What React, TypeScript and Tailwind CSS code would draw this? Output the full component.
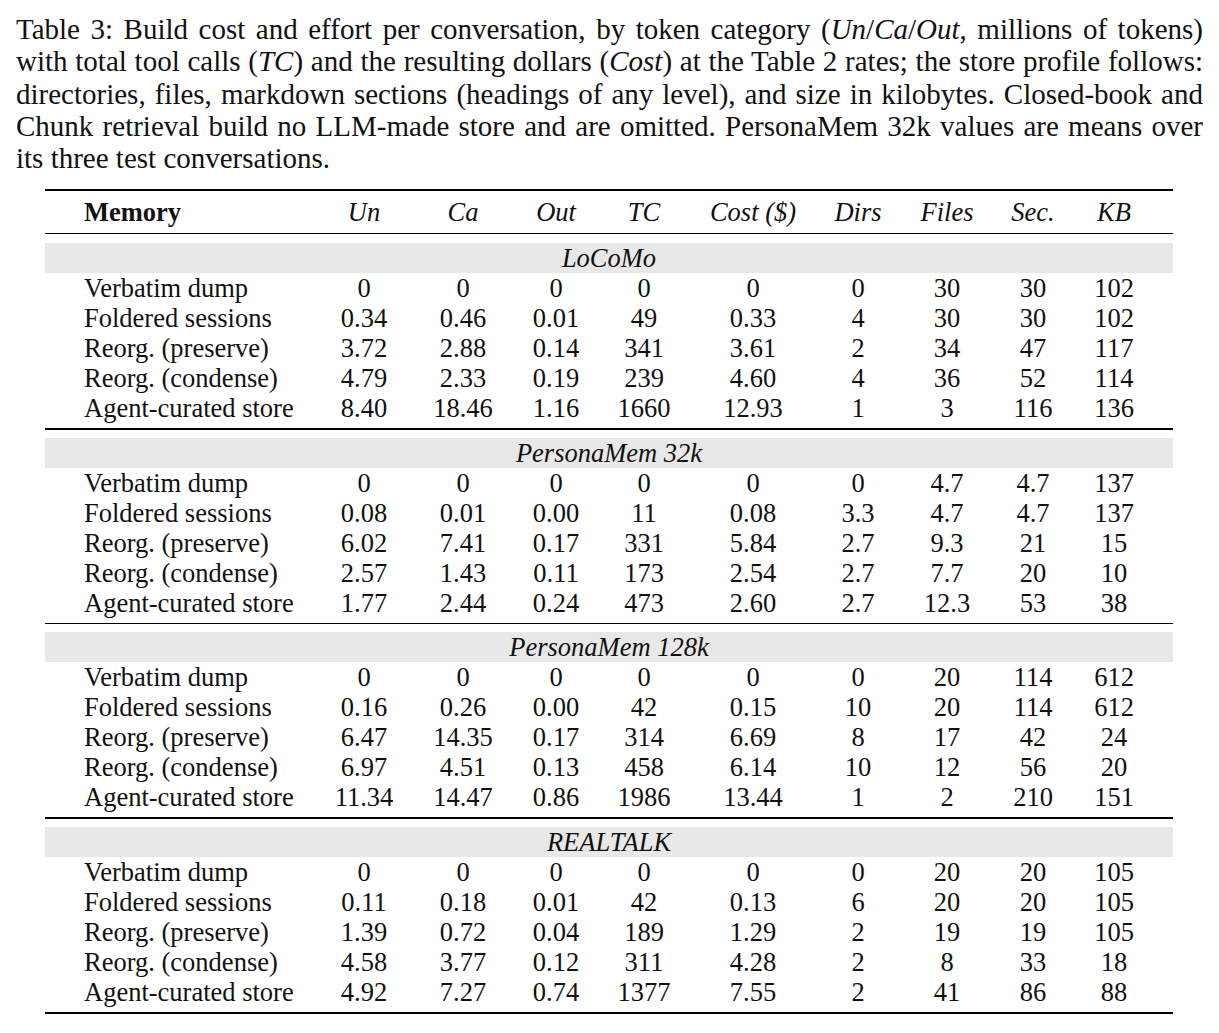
const captionLines = [
  <>Table 3: Build cost and effort per conversation, by token category (<i>Un</i>/<i>Ca</i>/<i>Out</i>, millions of tokens)</>,
  <>with total tool calls (<i>TC</i>) and the resulting dollars (<i>Cost</i>) at the Table 2 rates; the store profile follows:</>,
  <>directories, files, markdown sections (headings of any level), and size in kilobytes. Closed-book and</>,
  <>Chunk retrieval build no LLM-made store and are omitted. PersonaMem 32k values are means over</>,
];

const headers = ['Un', 'Ca', 'Out', 'TC', 'Cost ($)', 'Dirs', 'Files', 'Sec.', 'KB'];

const groups = [
  {
    name: 'LoCoMo',
    rows: [
      ['Verbatim dump', '0', '0', '0', '0', '0', '0', '30', '30', '102'],
      ['Foldered sessions', '0.34', '0.46', '0.01', '49', '0.33', '4', '30', '30', '102'],
      ['Reorg. (preserve)', '3.72', '2.88', '0.14', '341', '3.61', '2', '34', '47', '117'],
      ['Reorg. (condense)', '4.79', '2.33', '0.19', '239', '4.60', '4', '36', '52', '114'],
      ['Agent-curated store', '8.40', '18.46', '1.16', '1660', '12.93', '1', '3', '116', '136'],
    ],
  },
  {
    name: 'PersonaMem 32k',
    rows: [
      ['Verbatim dump', '0', '0', '0', '0', '0', '0', '4.7', '4.7', '137'],
      ['Foldered sessions', '0.08', '0.01', '0.00', '11', '0.08', '3.3', '4.7', '4.7', '137'],
      ['Reorg. (preserve)', '6.02', '7.41', '0.17', '331', '5.84', '2.7', '9.3', '21', '15'],
      ['Reorg. (condense)', '2.57', '1.43', '0.11', '173', '2.54', '2.7', '7.7', '20', '10'],
      ['Agent-curated store', '1.77', '2.44', '0.24', '473', '2.60', '2.7', '12.3', '53', '38'],
    ],
  },
  {
    name: 'PersonaMem 128k',
    rows: [
      ['Verbatim dump', '0', '0', '0', '0', '0', '0', '20', '114', '612'],
      ['Foldered sessions', '0.16', '0.26', '0.00', '42', '0.15', '10', '20', '114', '612'],
      ['Reorg. (preserve)', '6.47', '14.35', '0.17', '314', '6.69', '8', '17', '42', '24'],
      ['Reorg. (condense)', '6.97', '4.51', '0.13', '458', '6.14', '10', '12', '56', '20'],
      ['Agent-curated store', '11.34', '14.47', '0.86', '1986', '13.44', '1', '2', '210', '151'],
    ],
  },
  {
    name: 'REALTALK',
    rows: [
      ['Verbatim dump', '0', '0', '0', '0', '0', '0', '20', '20', '105'],
      ['Foldered sessions', '0.11', '0.18', '0.01', '42', '0.13', '6', '20', '20', '105'],
      ['Reorg. (preserve)', '1.39', '0.72', '0.04', '189', '1.29', '2', '19', '19', '105'],
      ['Reorg. (condense)', '4.58', '3.77', '0.12', '311', '4.28', '2', '8', '33', '18'],
      ['Agent-curated store', '4.92', '7.27', '0.74', '1377', '7.55', '2', '41', '86', '88'],
    ],
  },
];

// column widths follow the printed table: label column then nine centred numbers
const cols = 'grid grid-cols-[269px_100px_98px_88px_88px_130px_80px_98px_74px_88px_15px]';

export default function App() {
  return (
    <div className="w-[1219px] h-[1033px] bg-white text-[#111] font-['Liberation_Serif','Times_New_Roman',serif] overflow-hidden">
      <div className="pl-[16px] pr-[16px] pt-[13px] text-[29px] leading-[32.3px]">
        {captionLines.map((line, i) => (
          <div key={i} className="text-justify [text-align-last:justify] whitespace-nowrap">
            {line}
          </div>
        ))}
        <div>its three test conversations.</div>
      </div>

      <div className="ml-[45px] w-[1128px] mt-[14.5px] text-[26.5px] leading-[30px]">
        <div className="h-[2px] bg-black" />
        <div className={`${cols} h-[42px] items-center`}>
          <div className="pl-[39px] font-bold">Memory</div>
          {headers.map((h) => (
            <div key={h} className="text-center italic">{h}</div>
          ))}
          <div />
        </div>
        {groups.map((g, gi) => (
          <div key={g.name}>
            <div className="h-[1.5px] bg-black" />
            <div className={gi === 0 ? 'pt-[9px] pb-[5px]' : 'pt-[8px] pb-[5px]'}>
              <div className="h-[30px] bg-[#e8e8e8] text-center italic">{g.name}</div>
              {g.rows.map((r) => (
                <div key={r[0]} className={`${cols} h-[30px]`}>
                  <div className="pl-[39px] whitespace-nowrap">{r[0]}</div>
                  {r.slice(1).map((v, vi) => (
                    <div key={vi} className="text-center">{v}</div>
                  ))}
                  <div />
                </div>
              ))}
            </div>
          </div>
        ))}
        <div className="h-[2px] bg-black" />
      </div>
    </div>
  );
}
